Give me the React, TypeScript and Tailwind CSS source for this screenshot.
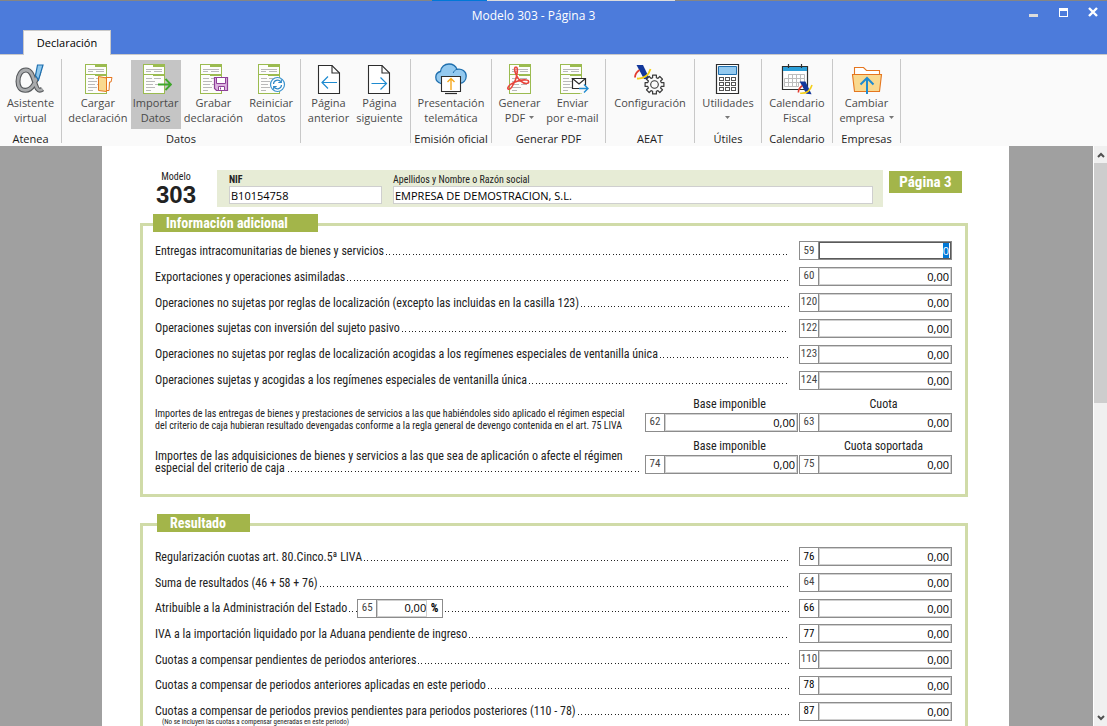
import { useEffect, useRef, type ReactNode } from "react";

const narrow = "font-['Roboto_Condensed','Roboto',sans-serif]";

/* ---------- icons ---------- */

function Icon({ children }: { children: ReactNode }) {
  return (
    <svg viewBox="0 0 32 32" width="32" height="32" fill="none" aria-hidden="true" className="block shrink-0">
      {children}
    </svg>
  );
}

function Sheet({ x = 3 }: { x?: number }) {
  return (
    <g transform={`translate(${x} 1)`} shapeRendering="crispEdges">
      <rect x="0" y="0" width="22" height="30" fill="#9bbb50" />
      <rect x="1" y="1" width="20" height="28" fill="#fdfdfb" />
      <rect x="10" y="0" width="12" height="3" fill="#9bbb50" />
      <rect x="0" y="10" width="22" height="1" fill="#9bbb50" />
      <rect x="10" y="10" width="12" height="2" fill="#9bbb50" />
      <g fill="#b9b9b9">
        <rect x="3" y="5" width="8" height="1" />
        <rect x="11" y="5" width="8" height="1" />
        <rect x="3" y="7" width="5" height="1" />
        <rect x="11" y="7" width="8" height="1" />
        <rect x="3" y="14" width="6" height="1" />
        <rect x="11" y="14" width="7" height="1" />
        <rect x="3" y="17" width="9" height="1" />
        <rect x="3" y="20" width="7" height="1" />
        <rect x="12" y="20" width="6" height="1" />
        <rect x="3" y="23" width="9" height="1" />
        <rect x="3" y="26" width="5" height="1" />
      </g>
    </g>
  );
}

const alphaStroke =
  "M25 8.500C22 17 19.500 27 11.500 27.300 6.500 27.500 4 24 4 18.500 4 12 7 7 12 7c6.500 0 7.500 10 10 16 1.300 3.800 3.500 5.500 6.500 3";

function AlphaIcon() {
  return (
    <Icon>
      <path d={alphaStroke} stroke="#55585b" strokeWidth="5" />
      <path d={alphaStroke} stroke="#a9abad" strokeWidth="2.800" />
      <path d="M23.500 2h5.500l-4.500 15-3-4.500z" fill="#8ec8ee" stroke="#1f6fae" strokeWidth="1.200" />
    </Icon>
  );
}

function LoadIcon() {
  return (
    <Icon>
      <Sheet />
      <path d="M23.500 14.500h6.500l-1 4.500h-1.500l-.5 8.500h-3z" fill="#fff" stroke="#e5761f" />
      <path d="M16.500 13.500l8 1.500v13.500l-8-1z" fill="#f9d98f" stroke="#e5761f" />
    </Icon>
  );
}

function ImportIcon() {
  return (
    <Icon>
      <Sheet />
      <path d="M18 21.500h13M25.500 16l5.500 5.500-5.500 5.500" stroke="#3fa62b" strokeWidth="1.800" />
    </Icon>
  );
}

function SaveIcon() {
  return (
    <Icon>
      <Sheet />
      <path d="M17.500 14.500h13v13h-11l-2-2z" fill="#dcb3e0" stroke="#8d3f97" strokeWidth="1.200" />
      <path d="M19.500 14.500h9v6h-9z" fill="#fff" stroke="#8d3f97" />
      <path d="M21.500 23.500h6v4h-6z" fill="#fff" stroke="#8d3f97" />
      <path d="M23.500 24.500v2" stroke="#8d3f97" />
    </Icon>
  );
}

function ResetIcon() {
  return (
    <Icon>
      <Sheet />
      <circle cx="22.500" cy="21.500" r="7" fill="#fff" stroke="#3b93cf" strokeWidth="1.200" />
      <path d="M18.500 21a4 4 0 0 1 7.200-2.200M26.500 22a4 4 0 0 1-7.200 2.200" stroke="#2b87c7" strokeWidth="1.200" />
      <path d="M26.300 16.500v3h-3M18.700 26.500v-3h3" stroke="#2b87c7" strokeWidth="1.200" />
    </Icon>
  );
}

function PageIcon({ forward = false }: { forward?: boolean }) {
  return (
    <Icon>
      <path d="M5.500 2.500h13.500l7.500 7.500v20.500h-21z" fill="#fff" stroke="#2d2d2d" strokeWidth="1.100" />
      <path d="M19 2.500v7.500h7.500" stroke="#2d2d2d" strokeWidth="1.100" />
      {forward ? (
        <path d="M8.500 20.500h14.500M17.500 14.500l6 6-6 6" stroke="#1f8bd0" strokeWidth="1.200" />
      ) : (
        <path d="M24 19.500H9.500M15 13.500l-6 6 6 6" stroke="#1f8bd0" strokeWidth="1.200" />
      )}
    </Icon>
  );
}

function CloudIcon() {
  return (
    <Icon>
      <path
        d="M6 20.500C2.500 19.500.8 17 .8 14.300c0-3 2.200-5.300 4.700-5.800C6 4 9.500 1 14 1c3.700 0 6.800 2.200 8 5.300 4.800-1 9.200 2 9.200 6.700 0 4-2.700 6.800-6 7.300z"
        fill="#93c9ef"
        stroke="#1f6fae"
        strokeWidth="1.300"
      />
      <path d="M22 6.300c-2 .6-3.300 2-3.800 3.700" stroke="#1f6fae" />
      <path d="M6.500 13.500h19v15h-19z" fill="#fff" stroke="#2d2d2d" strokeWidth="1.100" />
      <path d="M10 30.500h12" stroke="#2d2d2d" strokeWidth="1.200" />
      <path d="M16 27V16M12.500 19l3.500-3.500 3.500 3.500" stroke="#f5a81c" strokeWidth="1.400" />
    </Icon>
  );
}

function PdfIcon() {
  return (
    <Icon>
      <Sheet x={6} />
      <path
        d="M13 4c-2.200 0-1.500 4.500.2 8 2 4.300 6.200 8.500 10 8.500 3 0 3.500-3 .3-3.500-4.300-.8-11.500 1.500-15.500 4.200-3 2-4 4.600-2.500 5 2 .5 4.700-4 7-9.500 1.500-3.800 3-12.700.5-12.700z"
        stroke="#e8453c"
        strokeWidth="1.600"
      />
    </Icon>
  );
}

function MailIcon() {
  return (
    <Icon>
      <Sheet />
      <path d="M15.500 15.500h13v10h-13z" fill="#fff" stroke="#2d2d2d" strokeWidth="1.200" />
      <path d="M15.500 15.500l6.500 5.500 6.500-5.500" stroke="#2d2d2d" strokeWidth="1.200" />
      <path d="M23 22.500h8v8h-8z" fill="#fafafa" />
      <path d="M22 25.500h9M27 21.500l4 4-4 4" stroke="#1f8bd0" strokeWidth="1.400" />
    </Icon>
  );
}

function AgencyMark() {
  return (
    <>
      <path d="M2.500 1h6.500l7 14.500-6-.5z" fill="#12379b" />
      <path d="M1 13.500c0-3 1.500-5.500 4.500-7.500" stroke="#e23b2e" strokeWidth="1.800" />
      <path d="M3 14.500c6.500.5 11.500-3 13.500-9.500" stroke="#f4cf17" strokeWidth="1.800" />
    </>
  );
}

const gearPath =
  Array.from({ length: 8 }, (_, i) => {
    const mid = (i * Math.PI) / 4;
    return [
      [7, -0.27],
      [9.6, -0.2],
      [9.6, 0.2],
      [7, 0.27],
    ]
      .map(([r, a], j) => {
        const px = (20.5 + r * Math.cos(mid + a)).toFixed(2);
        const py = (21.5 + r * Math.sin(mid + a)).toFixed(2);
        return `${i === 0 && j === 0 ? "M" : "L"}${px} ${py}`;
      })
      .join("");
  }).join("") + "Z";

function ConfigIcon() {
  return (
    <Icon>
      <g transform="translate(0 1)">
        <AgencyMark />
      </g>
      <path d={gearPath} fill="#fafafa" stroke="#3a3a3a" strokeWidth="1.200" strokeLinejoin="round" />
      <circle cx="20.500" cy="21.500" r="3.800" stroke="#3a3a3a" strokeWidth="1.100" />
    </Icon>
  );
}

function CalculatorIcon() {
  return (
    <Icon>
      <path d="M4.500 1.500h22v29h-22z" fill="#fff" stroke="#2d2d2d" strokeWidth="1.200" />
      <path d="M6.500 3.500h18v8h-18z" fill="#93c9ef" stroke="#1f6fae" />
      {[14.5, 19.5, 24.5].map((y) =>
        [7.5, 13.5, 19.5].map((x) => <rect key={`${x}-${y}`} x={x} y={y} width="4" height="3" stroke="#555" />)
      )}
    </Icon>
  );
}

function CalendarIcon() {
  return (
    <Icon>
      <path d="M1.500 3.500h25v23h-25z" fill="#fff" stroke="#2d2d2d" strokeWidth="1.200" />
      <path d="M2 4h24v4H2z" fill="#2c9fd8" />
      <path d="M7.500 1v4M20.500 1v4" stroke="#2d2d2d" strokeWidth="1.200" />
      <path d="M7.500 11.500h16v4h-16zM3.500 15.500h20v4h-20zM3.500 19.500h14v4h-14zM7.500 11.500v12M11.500 11.500v12M15.500 11.500v12M19.500 11.500v8" stroke="#bdbdbd" />
      <g transform="translate(16.500 17.500) scale(.88)">
        <AgencyMark />
      </g>
    </Icon>
  );
}

function FolderIcon() {
  return (
    <Icon>
      <path d="M3.500 12V4.500h9l3 3h13V12" fill="#fff" stroke="#e5761f" strokeWidth="1.100" />
      <path d="M1.500 11.500h29l-2 17h-25z" fill="#f9d98f" stroke="#e5761f" strokeWidth="1.100" />
      <path d="M16 31V15M9.500 21.500L16 15l6.500 6.500" stroke="#1f8bd0" strokeWidth="2" />
    </Icon>
  );
}

/* ---------- ribbon ---------- */

function Caret() {
  return (
    <svg viewBox="0 0 5 3" width="5" height="3" aria-hidden="true" className="inline-block align-middle">
      <path d="M0 0h5L2.500 3z" fill="#777" />
    </svg>
  );
}

function Tool({ icon, first, second, caret, active }: { icon: ReactNode; first: string; second?: string; caret?: boolean; active?: boolean }) {
  return (
    <button
      type="button"
      className={`flex h-[69px] flex-col items-center justify-self-center pt-[3px] text-center text-[11px] leading-[15px] whitespace-nowrap text-[#4a4a4a] ${active ? "w-[50px] bg-[#c5c5c5]" : ""}`}
    >
      {icon}
      <span>{first}</span>
      <span className="flex h-[15px] items-center gap-[4px]">
        {second}
        {caret && <Caret />}
      </span>
    </button>
  );
}

function Group({ name, width, cols, children }: { name: string; width: string; cols: string; children: ReactNode }) {
  return (
    <section aria-label={name || "Páginas"} className={`flex h-[84px] shrink-0 flex-col border-r border-[#c8c8c8] pt-px ${width}`}>
      <div className={`grid ${cols}`}>{children}</div>
      <h2 className="mt-[2px] text-center text-[11px] leading-[15px] whitespace-nowrap text-[#1c1c1c]">{name}</h2>
    </section>
  );
}

/* ---------- form ---------- */

function Box({ code, value, label, focus, strong }: { code: string; value: string; label: string; focus?: boolean; strong?: boolean }) {
  const ref = useRef<HTMLInputElement>(null);
  useEffect(() => {
    if (focus) {
      ref.current?.focus({ preventScroll: true });
      ref.current?.select();
    }
  }, [focus]);
  return (
    <div className="flex h-[19px] w-full border border-[#8c8c8c]">
      <label
        htmlFor={`casilla-${code}`}
        aria-label={label}
        className={`flex w-[19px] shrink-0 items-center justify-center border-r border-[#8c8c8c] text-[11px] ${narrow} ${strong ? "text-black" : "text-[#444]"}`}
      >
        {code}
      </label>
      <input
        ref={ref}
        id={`casilla-${code}`}
        defaultValue={value}
        className={`min-w-0 flex-1 border px-px text-right text-[11px] leading-[15px] text-black outline-none selection:bg-[#0078d7] selection:text-white ${focus ? "border-[#5a5a5a]" : "border-[#d0d0d0]"}`}
      />
    </div>
  );
}

const dots =
  "h-px bg-[linear-gradient(90deg,#222_1px,transparent_1px,transparent_3px,#222_3px,#222_4px,transparent_4px,transparent_7px,#222_7px,#222_8px,transparent_8px)] bg-size-[10px_1px]";

function Leader() {
  return <span aria-hidden="true" className={`mt-[7px] min-w-0 flex-1 ${dots}`} />;
}

function Row({ text, code, focus, strong, value = "0,00", note, children }: { text: string; code: string; focus?: boolean; strong?: boolean; value?: string; note?: string; children?: ReactNode }) {
  return (
    <div className="flex items-center gap-[10px]">
      <div className="min-w-0 flex-1">
        <div className={`flex items-center gap-[2px] text-[12px] leading-[18px] text-[#222] ${narrow}`}>
          <span className="whitespace-nowrap">{text}</span>
          {children}
          <Leader />
        </div>
        {note && <p className={`-mt-[3px] -mb-[7px] pl-[7px] text-[7px] leading-[10px] text-[#222] ${narrow}`}>{note}</p>}
      </div>
      <div className="w-[153px] shrink-0">
        <Box code={code} value={value} label={text} focus={focus} strong={strong} />
      </div>
    </div>
  );
}

function PairRow({ left, right, codes, children }: { left: string; right: string; codes: [string, string]; children: ReactNode }) {
  return (
    <div className="flex items-end">
      <div className={`mr-[5px] min-w-0 flex-1 text-[#222] ${narrow}`}>{children}</div>
      {[left, right].map((title, i) => (
        <div key={title} className={i === 0 ? "mr-px w-[153px] shrink-0" : "w-[153px] shrink-0"}>
          <p className={`pl-[16px] text-center text-[12px] leading-[18px] text-[#222] ${narrow}`}>{title}</p>
          <Box code={codes[i]} value="0,00" label={title} />
        </div>
      ))}
    </div>
  );
}

function Panel({ title, badge, className, children }: { title: string; badge: string; className: string; children: ReactNode }) {
  return (
    <section className={`flex flex-col border-[3px] border-[#d0dba8] pr-[13px] pl-[12px] ${className}`}>
      <h2 className={`-mt-[12px] h-[18px] self-start bg-[#a3b54a] pl-[13px] text-[14px] leading-[19px] font-bold whitespace-nowrap text-white ${narrow} ${badge}`}>{title}</h2>
      {children}
    </section>
  );
}

export default function App() {
  return (
    <div className="flex h-screen flex-col overflow-hidden bg-white font-['Open_Sans','Noto_Sans',sans-serif]">
      <div className="flex h-px shrink-0 bg-[#858585]">
        <span className="ml-[39%] w-[5%] bg-[#0078d7]" />
        <span className="w-[17%] bg-[#dcdcdc]" />
      </div>

      <header className="shrink-0 bg-[#4c7bdb]">
        <div className="flex h-[29px] pl-[48px]">
          <h1 className="flex-1 text-center text-[12px] leading-[29px] text-white">Modelo 303 - Página 3</h1>
          <div className="flex">
            <button type="button" aria-label="Minimizar" className="flex w-[29px] justify-center pt-[13px]">
              <span className="h-[3px] w-[9px] bg-[#dcdcdc]" />
            </button>
            <button type="button" aria-label="Maximizar" className="flex w-[30px] justify-center pt-[7px]">
              <span className="size-[9px] border border-t-[3px] border-white" />
            </button>
            <button type="button" aria-label="Cerrar" className="flex w-[29px] justify-center pt-[6px]">
              <svg viewBox="0 0 10 10" width="10" height="10">
                <path d="M1 1l8 8M9 1L1 9" stroke="#fff" strokeWidth="2.400" />
              </svg>
            </button>
          </div>
        </div>
        <div className="flex h-[25px] items-end border-b border-[#c9c9c9] pl-[23px]" role="tablist">
          <button type="button" role="tab" aria-selected="true" className="-mb-px h-[25px] w-[88px] border border-b-0 border-[#c9c9c9] bg-[#fafafa] text-[11px] text-black">
            Declaración
          </button>
        </div>
      </header>

      <nav aria-label="Herramientas" className="flex h-[91px] shrink-0 bg-[#fafafa] pt-[4px]">
        <Group name="Atenea" width="w-[62px]" cols="grid-cols-1">
          <Tool icon={<AlphaIcon />} first="Asistente" second="virtual" />
        </Group>
        <Group name="Datos" width="w-[239px]" cols="grid-cols-4 pl-[7px]">
          <Tool icon={<LoadIcon />} first="Cargar" second="declaración" />
          <Tool icon={<ImportIcon />} first="Importar" second="Datos" active />
          <Tool icon={<SaveIcon />} first="Grabar" second="declaración" />
          <Tool icon={<ResetIcon />} first="Reiniciar" second="datos" />
        </Group>
        <Group name="" width="w-[110px]" cols="grid-cols-2 pl-[2px] pr-[5px]">
          <Tool icon={<PageIcon />} first="Página" second="anterior" />
          <Tool icon={<PageIcon forward />} first="Página" second="siguiente" />
        </Group>
        <Group name="Emisión oficial" width="w-[81px]" cols="grid-cols-1">
          <Tool icon={<CloudIcon />} first="Presentación" second="telemática" />
        </Group>
        <Group name="Generar PDF" width="w-[114px]" cols="grid-cols-2 pl-px pr-[6px]">
          <Tool icon={<PdfIcon />} first="Generar" second="PDF" caret />
          <Tool icon={<MailIcon />} first="Enviar" second="por e-mail" />
        </Group>
        <Group name="AEAT" width="w-[89px]" cols="grid-cols-1">
          <Tool icon={<ConfigIcon />} first="Configuración" />
        </Group>
        <Group name="Útiles" width="w-[67px]" cols="grid-cols-1">
          <Tool icon={<CalculatorIcon />} first="Utilidades" caret />
        </Group>
        <Group name="Calendario" width="w-[71px]" cols="grid-cols-1">
          <Tool icon={<CalendarIcon />} first="Calendario" second="Fiscal" />
        </Group>
        <Group name="Empresas" width="w-[68px]" cols="grid-cols-1">
          <Tool icon={<FolderIcon />} first="Cambiar" second="empresa" caret />
        </Group>
      </nav>

      <div className="flex min-h-0 flex-1">
        <main className="min-w-0 flex-1 overflow-hidden bg-[#a0a0a0] pr-[84px] pl-[102px]">
          <div className="bg-white pt-[24px] pr-[41px] pb-[40px] pl-[38px]">
            <div className="flex items-start pr-[6px]">
              <div className="w-[72px] shrink-0 text-center text-[#222]">
                <p className={`text-[10px] leading-[14px] ${narrow}`}>Modelo</p>
                <p className="font-['Liberation_Sans',sans-serif] text-[24px] leading-[22px] font-bold">303</p>
              </div>
              <div className="ml-[5px] flex h-[37px] min-w-0 flex-1 gap-[11px] bg-[#e7ecd6] pt-[4px] pr-[10px] pl-[12px]">
                <div className="flex w-[153px] flex-col">
                  <label htmlFor="nif" className={`text-[10px] leading-[12px] font-bold text-[#222] ${narrow}`}>
                    NIF
                  </label>
                  <input id="nif" defaultValue="B10154758" className="h-[18px] w-full border border-[#cfcfcf] bg-white px-px text-[11px] text-black outline-none" />
                </div>
                <div className="flex min-w-0 flex-1 flex-col">
                  <label htmlFor="razon" className={`text-[10px] leading-[12px] text-[#222] ${narrow}`}>
                    Apellidos y Nombre o Razón social
                  </label>
                  <input id="razon" defaultValue="EMPRESA DE DEMOSTRACION, S.L." className="h-[18px] w-full border border-[#cfcfcf] bg-white px-px text-[11px] text-black outline-none" />
                </div>
              </div>
              <p className={`mt-px ml-[6px] h-[22px] w-[73px] bg-[#a3b54a] text-center text-[15px] leading-[23px] font-bold whitespace-nowrap text-white ${narrow}`}>
                Página 3
              </p>
            </div>

            <Panel title="Información adicional" badge="ml-[-2px] w-[165px]" className="mt-[16px] h-[274px]">
              <div className="mt-[6px] grid h-[155px] shrink-0 auto-rows-fr grid-cols-1">
                <Row text="Entregas intracomunitarias de bienes y servicios" code="59" value="0" focus />
                <Row text="Exportaciones y operaciones asimiladas" code="60" />
                <Row text="Operaciones no sujetas por reglas de localización (excepto las incluidas en la casilla 123)" code="120" />
                <Row text="Operaciones sujetas con inversión del sujeto pasivo " code="122" />
                <Row text="Operaciones no sujetas por reglas de localización acogidas a los regímenes especiales de ventanilla única" code="123" />
                <Row text="Operaciones sujetas y acogidas a los regímenes especiales de ventanilla única" code="124" />
              </div>
              <div className="mt-[2px] flex flex-col gap-[5px]">
                <PairRow left="Base imponible" right="Cuota" codes={["62", "63"]}>
                  <p className="text-[10px] leading-[12px] whitespace-nowrap">
                    Importes de las entregas de bienes y prestaciones de servicios a las que habiéndoles sido aplicado el régimen especial
                    <br />
                    del criterio de caja hubieran resultado devengadas conforme a la regla general de devengo contenida en el art. 75 LIVA
                  </p>
                </PairRow>
                <PairRow left="Base imponible" right="Cuota soportada" codes={["74", "75"]}>
                  <div className="text-[12px] leading-[12px]">
                    <p className="whitespace-nowrap">Importes de las adquisiciones de bienes y servicios a las que sea de aplicación o afecte el régimen</p>
                    <p className="flex items-center gap-[3px]">
                      <span>especial del criterio de caja</span>
                      <Leader />
                    </p>
                  </div>
                </PairRow>
              </div>
            </Panel>

            <Panel title="Resultado" badge="ml-[2px] w-[93px]" className="mt-[26px] pb-[40px]">
              <div className="mt-[12px] grid h-[180px] shrink-0 auto-rows-fr grid-cols-1">
                <Row text="Regularización cuotas art. 80.Cinco.5ª LIVA " code="76" strong />
                <Row text="Suma de resultados (46 + 58 + 76) " code="64" />
                <Row text="Atribuible a la Administración del Estado" code="66" strong>
                  <span aria-hidden="true" className={`mt-[7px] w-[8px] ${dots}`} />
                  <span className="-ml-[2px] flex h-[19px] w-[86px] border border-[#8c8c8c]">
                    <label htmlFor="casilla-65" aria-label="Porcentaje atribuible" className="flex w-[19px] shrink-0 items-center justify-center border-r border-[#8c8c8c] text-[11px] text-[#444]">
                      65
                    </label>
                    <input id="casilla-65" defaultValue="0,00" className="w-[50px] border border-[#d0d0d0] text-right font-['Open_Sans','Noto_Sans',sans-serif] text-[11px] text-black outline-none" />
                    <span className="flex-1 text-center text-[12px] leading-[17px] font-bold text-black">%</span>
                  </span>
                </Row>
                <Row text="IVA a la importación liquidado por la Aduana pendiente de ingreso" code="77" strong />
                <Row text="Cuotas a compensar pendientes de periodos anteriores" code="110" />
                <Row text="Cuotas a compensar de periodos anteriores aplicadas en este periodo" code="78" strong />
                <Row text="Cuotas a compensar de periodos previos pendientes para periodos posteriores (110 - 78) " code="87" strong note="(No se incluyen las cuotas a compensar generadas en este periodo)" />
              </div>
            </Panel>
          </div>
        </main>

        <aside aria-label="Desplazamiento" className="flex w-[14px] shrink-0 flex-col border-l border-white bg-[#f0f0f0]">
          <button type="button" aria-label="Subir" className="flex h-[17px] shrink-0 items-center justify-center">
            <svg viewBox="0 0 8 6" width="8" height="6">
              <path d="M1 5l3-3 3 3" fill="none" stroke="#505050" strokeWidth="2" />
            </svg>
          </button>
          <div className="flex-1">
            <div className="h-[44%] bg-[#cdcdcd]" />
          </div>
          <button type="button" aria-label="Bajar" className="flex h-[17px] shrink-0 items-center justify-center">
            <svg viewBox="0 0 8 6" width="8" height="6">
              <path d="M1 1l3 3 3-3" fill="none" stroke="#505050" strokeWidth="2" />
            </svg>
          </button>
        </aside>
      </div>
    </div>
  );
}
